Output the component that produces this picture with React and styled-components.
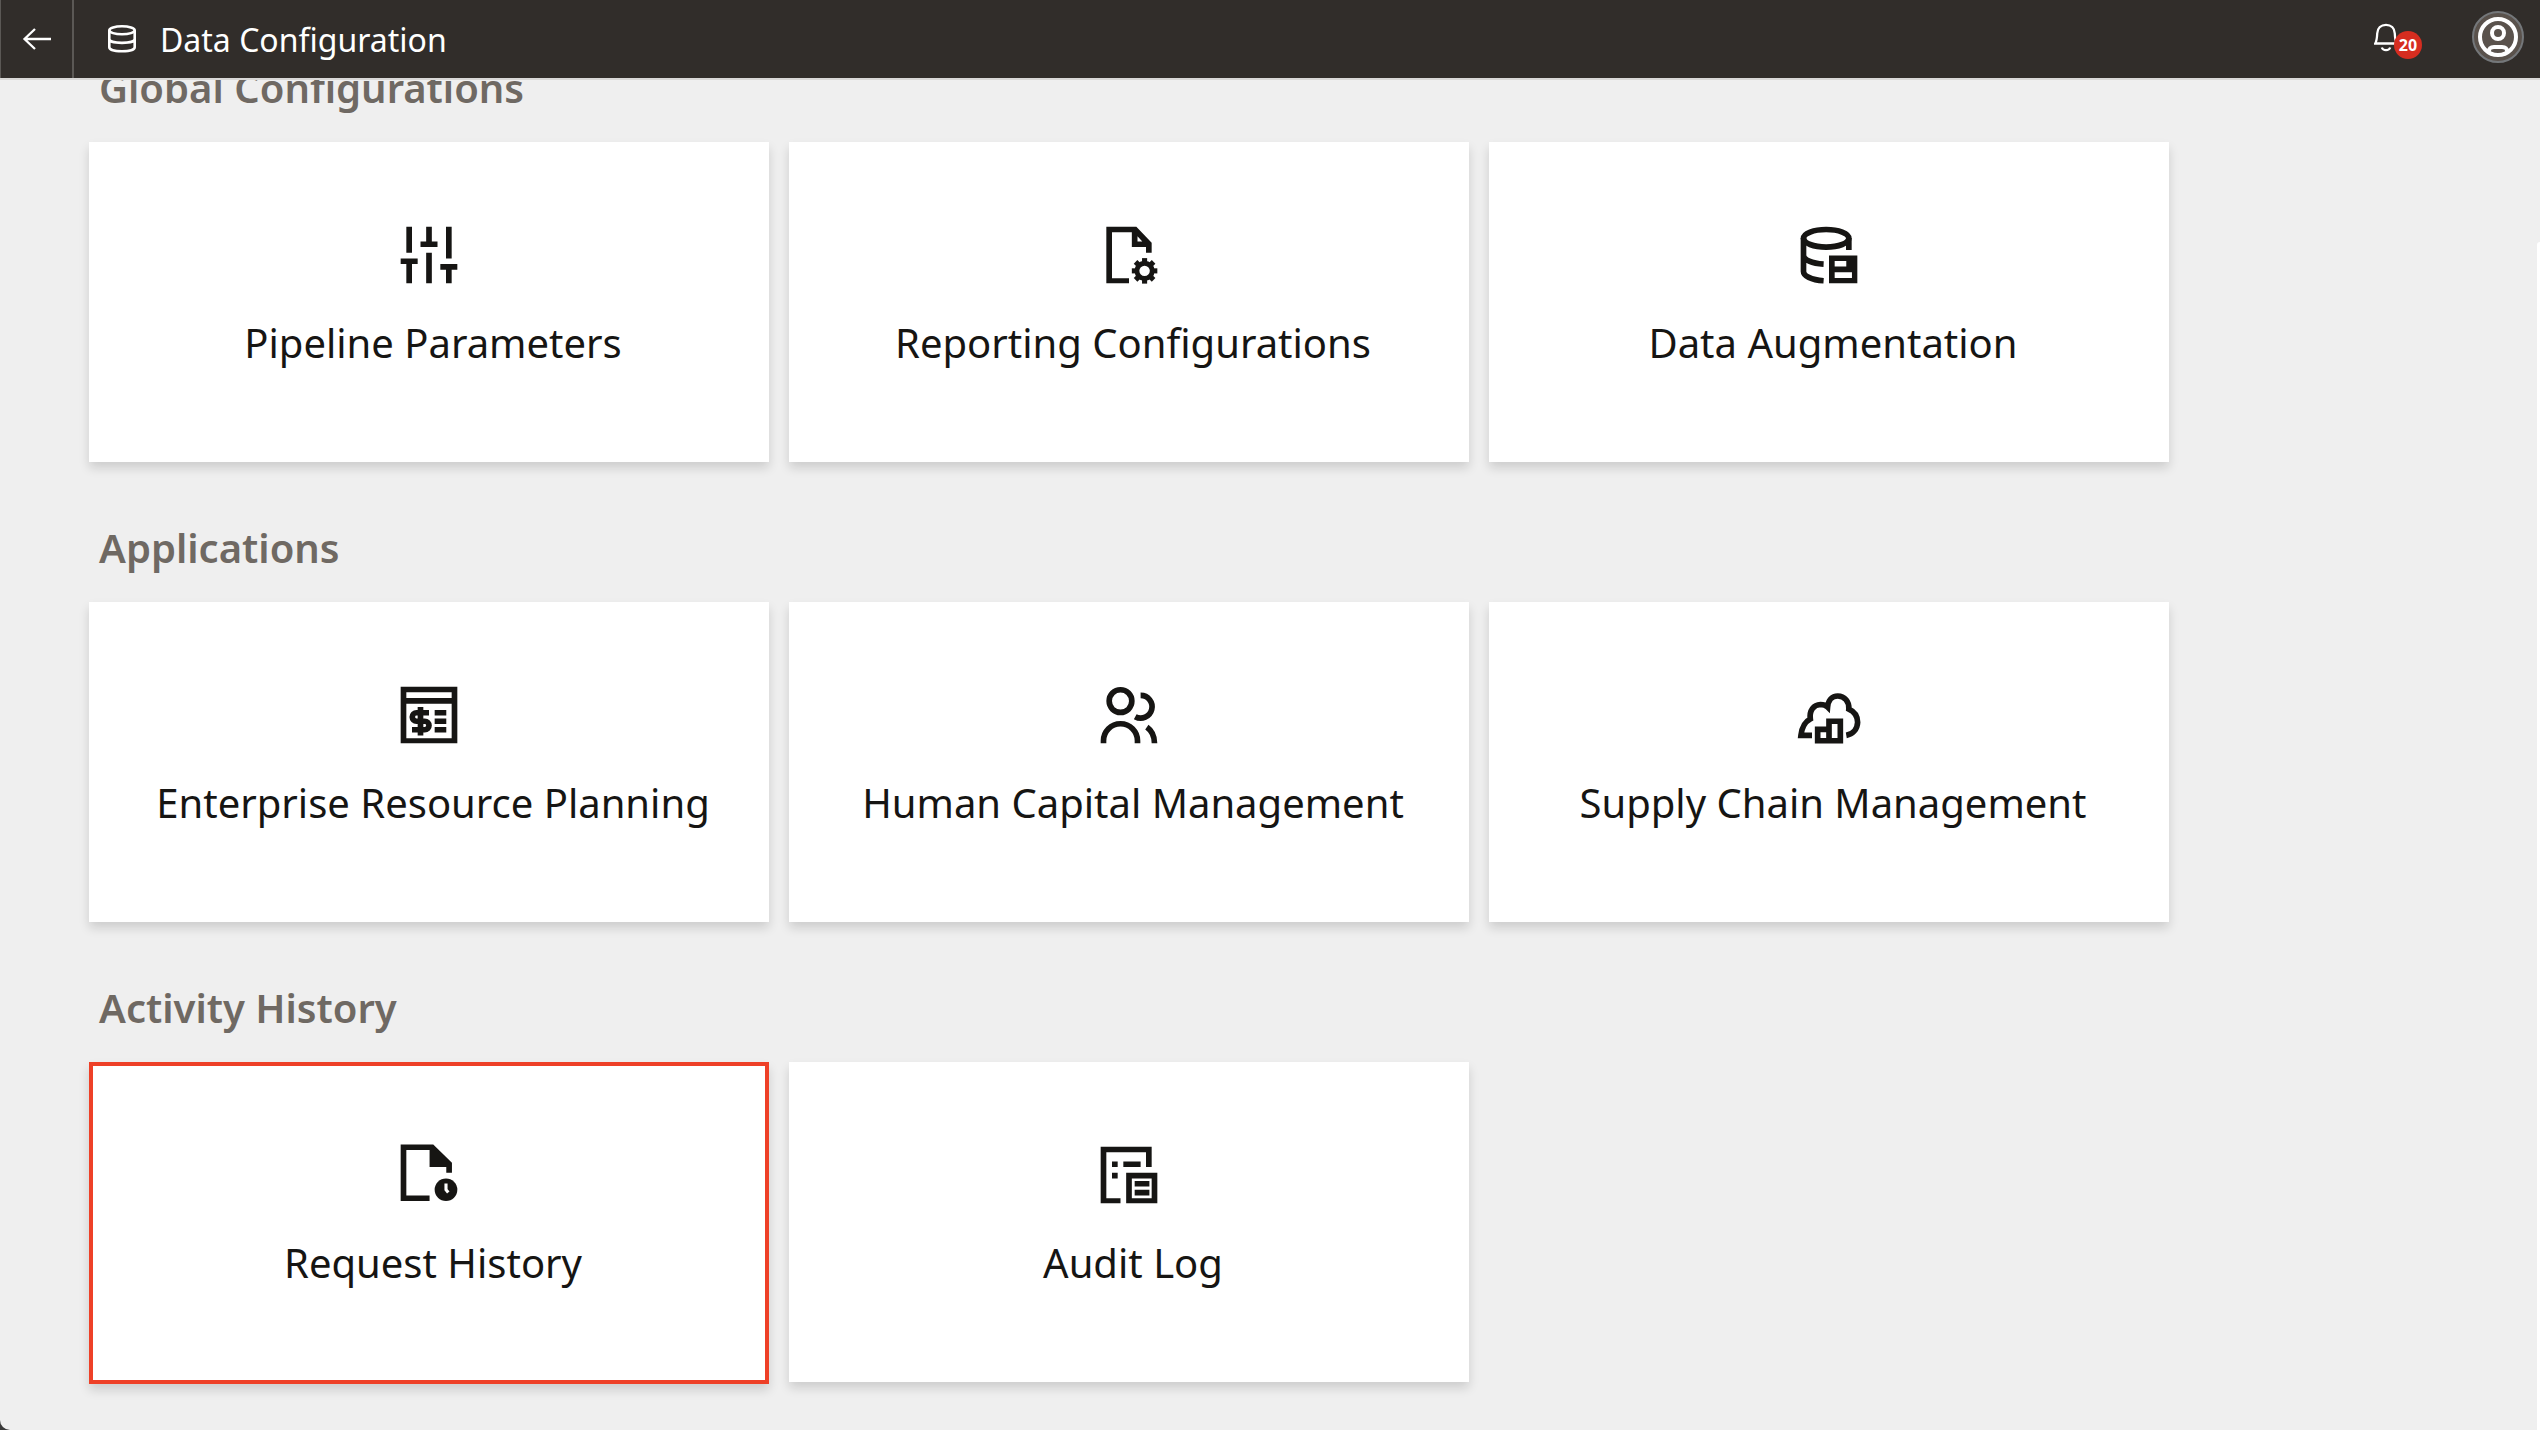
import React from 'react';
import styled, { createGlobalStyle, css } from 'styled-components';

const GlobalStyle = createGlobalStyle`
  * { box-sizing: border-box; }
  body {
    margin: 0;
    background: #3a3a3a;
    color: #161513;
    font-family: 'Noto Sans', 'Open Sans', sans-serif;
  }
`;

const Page = styled.div`
  display: flex;
  flex-direction: column;
  height: 100vh;
  overflow: hidden;
  background: #efefef;
  border-bottom-left-radius: 10px;
`;

const Header = styled.header`
  display: flex;
  flex: none;
  align-items: stretch;
  height: 80px;
  background: #312d2a;
  color: #fff;
  border-bottom: 2px solid #d9d8d7;
`;

const IconButton = styled.button`
  display: flex;
  align-items: center;
  justify-content: center;
  padding: 0;
  border: 0;
  background: none;
  color: inherit;
  cursor: pointer;
`;

const BackButton = styled(IconButton)`
  width: 74px;
  border-right: 2px solid #5b5855;
  border-left: 1px solid #5b5855;
`;

const TitleGroup = styled.div`
  display: flex;
  flex: 1;
  align-items: center;
  gap: 24px;
  padding-left: 32px;
`;

const Title = styled.h1`
  margin: 0;
  padding-top: 2px;
  font-size: 32px;
  line-height: 40px;
  font-weight: 400;
`;

const Actions = styled.div`
  display: flex;
  align-items: center;
  gap: 46px;
  padding: 0 16px 4px 0;
`;

const BellButton = styled(IconButton)`
  position: relative;
  justify-content: flex-start;
  width: 52px;
  height: 52px;
`;

const Badge = styled.span`
  position: absolute;
  right: 4px;
  bottom: 4px;
  width: 28px;
  height: 28px;
  border-radius: 50%;
  background: #d62d20;
  font: 700 16px/28px 'Noto Sans', sans-serif;
  text-align: center;
`;

const AvatarButton = styled(IconButton)`
  width: 52px;
  height: 52px;
  border: 2px solid #74777a;
  border-radius: 50%;
  background: #5a524c;
`;

const Body = styled.div`
  display: flex;
  flex: 1;
  min-height: 0;
`;

const Content = styled.main`
  flex: 1;
  min-width: 0;
  overflow: hidden;
  padding-left: 89px;
`;

const SideDrawer = styled.aside`
  flex: none;
  width: 3px;
  margin-top: 162px;
  border-top-left-radius: 8px;
  background: #fff;
`;

const Sections = styled.div`
  display: flex;
  flex-direction: column;
  gap: 56px;
  margin-top: -22px;
`;

const SectionTitle = styled.h2`
  margin: 0 0 24px;
  padding-left: 10px;
  color: #6f6963;
  font-size: 40px;
  line-height: 60px;
  font-weight: 600;
`;

const CardRow = styled.div`
  display: grid;
  grid-template-columns: repeat(auto-fill, 680px);
  align-items: start;
  gap: 20px;
`;

const Card = styled.button`
  display: flex;
  flex-direction: column;
  align-items: center;
  justify-content: center;
  gap: 26px;
  height: 320px;
  padding: 0 0 12px;
  border: 0;
  background: #fff;
  color: inherit;
  box-shadow: 0 6px 10px rgba(0, 0, 0, 0.14);
  font: inherit;
  cursor: pointer;
  ${(p) =>
    p.$selected &&
    css`
      height: 322px;
      padding-bottom: 14px;
      border: 4px solid #ee4027;
    `}
`;

const CardLabel = styled.span`
  padding-left: 8px;
  font-size: 40px;
  line-height: 56px;
`;

const Glyph = ({ children, size = 68 }) => (
  <svg width={size} height={size} viewBox="0 0 24 24" fill="currentColor" fillRule="evenodd" aria-hidden="true">
    {children}
  </svg>
);

const stroke = { fill: 'none', stroke: 'currentColor', strokeWidth: 2 };

const teeth = [0, 45, 90, 135, 180, 225, 270, 315];

const icons = {
  sliders: (
    <path d="M4 2h2v9.2H4zM2 13.2h6v2H6V22H4v-6.8H2zM11 2h2v5.2h2v2H9v-2h2zM11 11.2h2V22h-2zM18 2h2v11.2h-2zM16 15.2h6v2h-2V22h-2v-4.8h-2z" />
  ),
  report: (
    <>
      <path d="M4 2h10.6L20 7.7v3.5h-2v-2h-5V4H6v16.2h6V22H4zM15 5.4v1.8h1.7z" />
      <circle cx="17.5" cy="17.6" r="2.7" fill="none" stroke="currentColor" strokeWidth="1.7" />
      {teeth.map((a) => (
        <path key={a} d="M16.6 13.1h1.8v2h-1.8z" transform={`rotate(${a} 17.5 17.6)`} />
      ))}
    </>
  ),
  augmentation: (
    <>
      <ellipse cx="11" cy="6.1" rx="8" ry="3.1" {...stroke} />
      <path d="M19 6v4.2M3 6v11.8c0 1.5 2.6 3 7.1 3.3M3 12c0 1.7 3 3 7.1 3.2" {...stroke} />
      <path d="M12 12.2h10V22H12zM14 14.1v2h4.1v-2zM14 18.1v2h6.1v-2z" />
    </>
  ),
  finance: (
    <>
      <path d="M2 2h20v20H2zM4 4v2h16V4zM4 8v12.200h16V8z" />
      <path d="M14 10.2h4.1v2H14zM14 13.2h4.1v2H14zM14 16.2h4.1v2H14zM8 9.2h2v10H8z" />
      <path d="M12 11.2H7.600a1.500 1.500 0 0 0 0 3h2.900a1.500 1.500 0 0 1 0 3H6" {...stroke} />
    </>
  ),
  people: (
    <path
      d="M9 3.1a4 4 0 1 0 0 8a4 4 0 1 0 0-8zM16.1 5.1a4 4 0 1 1-1.9 7.5M3 22v-.9a6 6 0 0 1 12 0v.9M18.3 16.3C20 17.5 21 19.3 21 22"
      {...stroke}
    />
  ),
  cloud: (
    <>
      <path
        d="M6 19.2H2.1C2.4 16.6 3.4 14.4 5.4 13.4C5 10.4 6.6 8.4 9 8.3C10 8.3 10.9 8.6 11.5 9.2C11.7 7 13 5.3 15.1 5.3C17.5 5.3 19.2 7.3 19 9.9C21 10.8 22.1 12.6 22.1 14.6C22 17 20.4 18.8 18.1 19.2"
        {...stroke}
      />
      <path d="M11 13.2h6v8.9H7v-6h4zM9 18.1v2h2v-2zM13 15.2v4.9h2v-4.9z" />
    </>
  ),
  history: (
    <>
      <path d="M2 1.2h11.5L20.1 7.7v3.5H18.1v-2H12.2v-6H4v16h8.2v2H2z" />
      <circle cx="18" cy="17.2" r="4" />
      <path d="M18 15v2.2l.8 1" fill="none" stroke="#fff" strokeWidth="1.1" />
    </>
  ),
  audit: (
    <path d="M2 2h18v7.2h-2V4H4v16.2h5V22H2zM6 7.2h2v2H6zM6 11.2h2v2H6zM10 7.2h6.1v2H10zM11 11.2h11V22H11zM13 13.2v7h7v-7zM14 14.1h5.2v2H14zM14 17.2h5.2v2H14z" />
  ),
};

const sections = [
  {
    title: 'Global Configurations',
    cards: [
      { icon: 'sliders', label: 'Pipeline Parameters' },
      { icon: 'report', label: 'Reporting Configurations' },
      { icon: 'augmentation', label: 'Data Augmentation' },
    ],
  },
  {
    title: 'Applications',
    cards: [
      { icon: 'finance', label: 'Enterprise Resource Planning' },
      { icon: 'people', label: 'Human Capital Management' },
      { icon: 'cloud', label: 'Supply Chain Management' },
    ],
  },
  {
    title: 'Activity History',
    cards: [
      { icon: 'history', label: 'Request History', selected: true },
      { icon: 'audit', label: 'Audit Log' },
    ],
  },
];

export default function App() {
  return (
    <Page>
      <GlobalStyle />
      <Header>
        <BackButton aria-label="Back">
          <svg width="30" height="24" viewBox="0 0 30 24" fill="none" stroke="currentColor" strokeWidth="2.3" aria-hidden="true">
            <path d="M29 12H2.500M13 2L2.500 12L13 22" />
          </svg>
        </BackButton>
        <TitleGroup>
          <svg width="30" height="30" viewBox="0 0 30 30" fill="none" stroke="currentColor" strokeWidth="2.6" aria-hidden="true">
            <ellipse cx="16" cy="6.3" rx="12.7" ry="4" />
            <path d="M3.300 6.300v17c0 2.400 5 4 12.700 4s12.700-1.600 12.700-4v-17M3.300 15c0 2.300 5 3.900 12.700 3.900S28.700 17.300 28.700 15" />
          </svg>
          <Title>Data Configuration</Title>
        </TitleGroup>
        <Actions>
          <BellButton aria-label="Notifications">
            <svg width="24" height="30" viewBox="0 0 24 30" fill="none" stroke="currentColor" strokeWidth="2.3" aria-hidden="true">
              <path d="M1.200 21.500H22.800C21 18.500 21 16 20.800 11.500C20.600 6 17 2.800 12 2.800S3.400 6 3.200 11.500C3 16 3 18.500 1.200 21.500zM7.800 25.500C9 29 15 29 16.200 25.500" />
            </svg>
            <Badge>20</Badge>
          </BellButton>
          <AvatarButton aria-label="Account">
            <svg width="42" height="42" viewBox="0 0 42 42" fill="none" stroke="currentColor" strokeWidth="4" aria-hidden="true">
              <circle cx="21" cy="21" r="18" />
              <circle cx="21" cy="17" r="6" />
              <path d="M12 35.500C12 31.500 14 31 17 31h8c3 0 5 .5 5 4.500" />
            </svg>
          </AvatarButton>
        </Actions>
      </Header>
      <Body>
        <Content>
          <Sections>
            {sections.map((section) => (
              <section key={section.title}>
                <SectionTitle>{section.title}</SectionTitle>
                <CardRow>
                  {section.cards.map((card) => (
                    <Card key={card.label} $selected={card.selected}>
                      <Glyph>{icons[card.icon]}</Glyph>
                      <CardLabel>{card.label}</CardLabel>
                    </Card>
                  ))}
                </CardRow>
              </section>
            ))}
          </Sections>
        </Content>
        <SideDrawer />
      </Body>
    </Page>
  );
}
